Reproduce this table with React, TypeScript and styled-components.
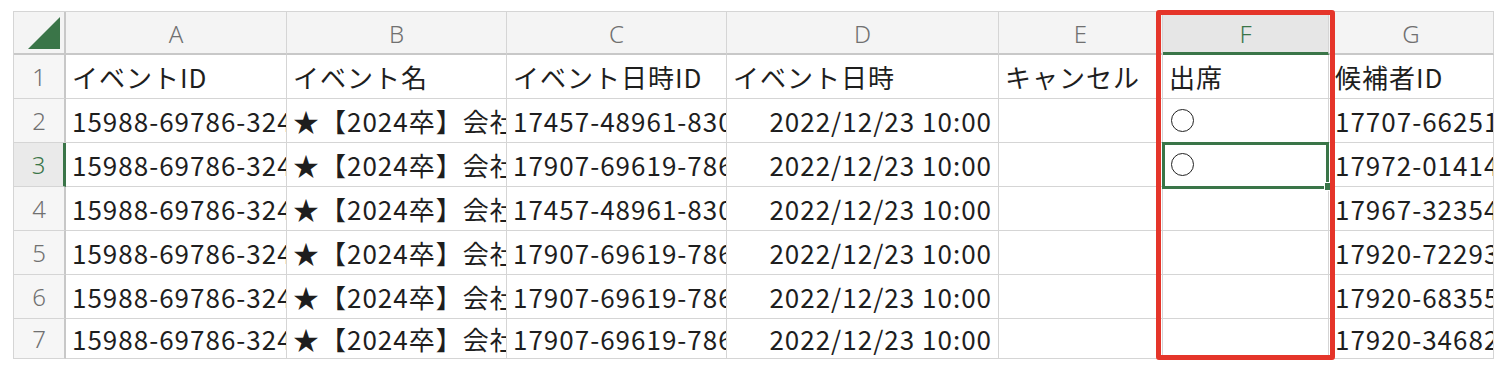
import React from 'react'
import styled, { createGlobalStyle, css } from 'styled-components'

const GlobalStyle = createGlobalStyle`
  html, body {
    margin: 0;
    padding: 0;
    background: #ffffff;
  }
  body {
    font-family: 'Noto Sans CJK JP', 'Noto Sans', sans-serif;
  }
`

const GRID = '#d5d5d5'
const GREEN = '#3a7548'

const columns = [
  { key: 'A', width: 221 },
  { key: 'B', width: 220 },
  { key: 'C', width: 220 },
  { key: 'D', width: 272 },
  { key: 'E', width: 164 },
  { key: 'F', width: 166 },
  { key: 'G', width: 165 },
]

const rows: string[][] = [
  ['イベントID', 'イベント名', 'イベント日時ID', 'イベント日時', 'キャンセル', '出席', '候補者ID'],
  ['15988-69786-3245', '★【2024卒】会社説明会', '17457-48961-8301', '2022/12/23 10:00', '', '〇', '17707-66251'],
  ['15988-69786-3245', '★【2024卒】会社説明会', '17907-69619-7862', '2022/12/23 10:00', '', '〇', '17972-01414'],
  ['15988-69786-3245', '★【2024卒】会社説明会', '17457-48961-8301', '2022/12/23 10:00', '', '', '17967-32354'],
  ['15988-69786-3245', '★【2024卒】会社説明会', '17907-69619-7862', '2022/12/23 10:00', '', '', '17920-72293'],
  ['15988-69786-3245', '★【2024卒】会社説明会', '17907-69619-7862', '2022/12/23 10:00', '', '', '17920-68355'],
  ['15988-69786-3245', '★【2024卒】会社説明会', '17907-69619-7862', '2022/12/23 10:00', '', '', '17920-34682'],
]

const activeCol = 'F'
const activeRow = 3

// dates are real date values in the sheet, so they sit on the right
const isDate = (v: string) => /^\d{4}\/\d{1,2}\/\d{1,2}/.test(v)

export default function App() {
  const template = `52px ${columns.map((c) => `${c.width}px`).join(' ')}`
  const rowTemplate = `43px repeat(6, 44px) 40px`

  return (
    <>
      <GlobalStyle />
      <Page>
        <SheetWrap>
          <Sheet style={{ gridTemplateColumns: template, gridTemplateRows: rowTemplate }}>
            <Corner>
              <CornerTriangle viewBox="0 0 32 32">
                <polygon points="32,0 32,32 0,32" fill={GREEN} />
              </CornerTriangle>
            </Corner>
            {columns.map((c) => (
              <ColHeader key={c.key} $active={c.key === activeCol}>
                {c.key}
              </ColHeader>
            ))}
            {rows.map((row, ri) => {
              const rowNo = ri + 1
              return (
                <React.Fragment key={rowNo}>
                  <RowHeader $active={rowNo === activeRow}>{rowNo}</RowHeader>
                  {row.map((value, ci) => {
                    const col = columns[ci]
                    const selected = rowNo === activeRow && col.key === activeCol
                    return (
                      <Cell
                        key={col.key}
                        $align={isDate(value) ? 'right' : 'left'}
                        $selected={selected}
                      >
                        {value === '〇' ? <CircleMark aria-label="〇" /> : value}
                        {selected && <FillHandle />}
                      </Cell>
                    )
                  })}
                </React.Fragment>
              )
            })}
          </Sheet>
          <Highlight />
        </SheetWrap>
      </Page>
    </>
  )
}

const Page = styled.div`
  padding: 11px 0 0 13px;
  width: 1506px;
  height: 370px;
  box-sizing: border-box;
`

const SheetWrap = styled.div`
  position: relative;
  display: inline-block;
`

const Sheet = styled.div`
  display: grid;
  border-top: 1px solid ${GRID};
  border-left: 1px solid ${GRID};
  overflow: hidden;
`

const headerBase = css`
  box-sizing: border-box;
  background: #f4f4f4;
  border-right: 1px solid ${GRID};
  border-bottom: 1px solid ${GRID};
  display: flex;
  align-items: center;
  justify-content: center;
  color: #707070;
  font-family: 'Noto Sans', 'Liberation Sans', sans-serif;
  font-weight: 300;
  font-size: 24px;
`

const Corner = styled.div`
  ${headerBase};
  border-bottom: 2px solid #c8c8c8;
  border-right: 2px solid #c8c8c8;
  justify-content: flex-end;
  align-items: flex-end;
  padding: 0 4px 4px 0;
`

const CornerTriangle = styled.svg`
  width: 32px;
  height: 32px;
  display: block;
`

const ColHeader = styled.div<{ $active?: boolean }>`
  ${headerBase};
  border-bottom: 2px solid #c8c8c8;
  padding-top: 2px;
  ${(p) =>
    p.$active &&
    css`
      background: #e6e6e6;
      color: ${GREEN};
      border-bottom: 3px solid ${GREEN};
    `}
`

const RowHeader = styled.div<{ $active?: boolean }>`
  ${headerBase};
  border-right: 2px solid #c8c8c8;
  background: #f6f6f6;
  ${(p) =>
    p.$active &&
    css`
      background: #eaeaea;
      color: ${GREEN};
      border-right: 3px solid ${GREEN};
    `}
`

const Cell = styled.div<{ $align?: 'left' | 'right'; $selected?: boolean }>`
  position: relative;
  box-sizing: border-box;
  border-right: 1px solid ${GRID};
  border-bottom: 1px solid ${GRID};
  display: flex;
  align-items: center;
  justify-content: ${(p) => (p.$align === 'right' ? 'flex-end' : 'flex-start')};
  padding: 0 6px 0 6px;
  font-size: 26px;
  letter-spacing: 1px;
  color: #1e1e1e;
  white-space: nowrap;
  overflow: ${(p) => (p.$selected ? 'visible' : 'hidden')};
  text-overflow: clip;
  ${(p) =>
    p.$selected &&
    css`
      z-index: 1;
      &::after {
        content: '';
        position: absolute;
        left: -1px;
        top: -1px;
        right: -1px;
        bottom: -3px;
        border: 3px solid ${GREEN};
        pointer-events: none;
      }
    `}
`

const CircleMark = styled.span`
  display: inline-block;
  width: 21px;
  height: 21px;
  border: 1.5px solid #222;
  border-radius: 50%;
  margin-left: 2px;
`

const FillHandle = styled.span`
  position: absolute;
  right: -5px;
  bottom: -5px;
  width: 7px;
  height: 7px;
  background: ${GREEN};
  border: 1.5px solid #fff;
  z-index: 2;
`

const Highlight = styled.div`
  position: absolute;
  left: 1143px;
  top: -1px;
  width: 179px;
  height: 350px;
  box-sizing: border-box;
  border: 5px solid #e5352a;
  border-radius: 3px;
  pointer-events: none;
  z-index: 3;
`
